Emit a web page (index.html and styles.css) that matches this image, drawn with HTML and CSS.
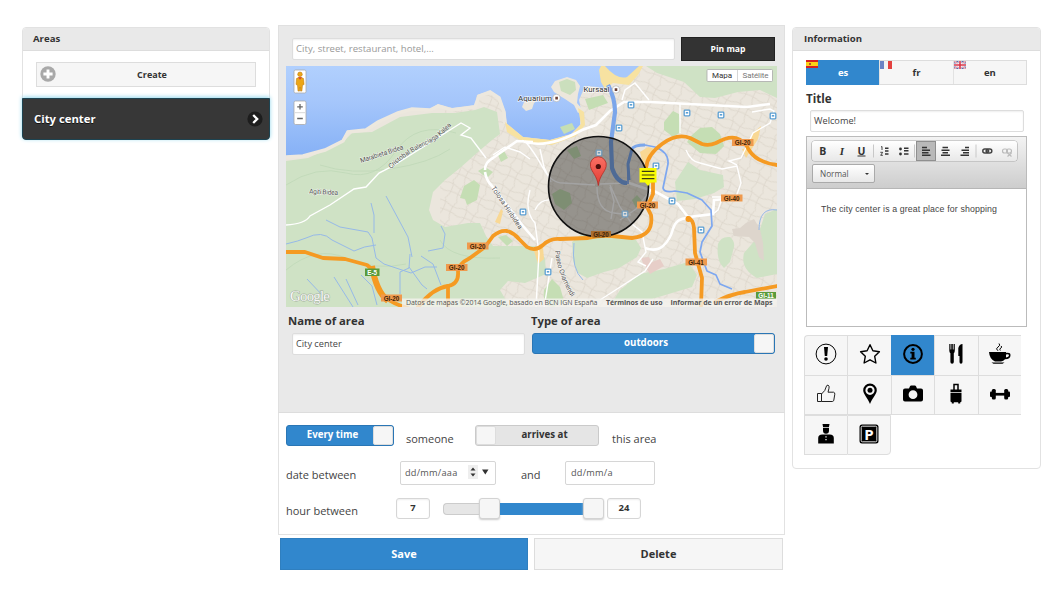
FILE: index.html
```html
<!DOCTYPE html>
<html lang="en">
<head>
<meta charset="utf-8">
<title>Areas</title>
<link rel="stylesheet" href="styles.css">
</head>
<body>
<main class="page">
  <section class="panel areas">
    <h2 class="panel-head">Areas</h2>
    <div class="areas-body">
      <button class="create">
        <svg class="plus" viewBox="0 0 16 16"><circle cx="8" cy="8" r="7.7" fill="#a9a9a9"/><path d="M8 3.4v9.2M3.4 8h9.2" stroke="#fff" stroke-width="2.9"/></svg>
        <span>Create</span>
      </button>
    </div>
    <a class="area-item"><span>City center</span>
      <svg class="chev" viewBox="0 0 16 16"><circle cx="8" cy="8" r="7.6" fill="#1d1d1d"/><path d="M6.2 4l4 4-4 4" fill="none" stroke="#fff" stroke-width="2.3"/></svg>
    </a>
  </section>

  <section class="center">
    <div class="editor">
      <div class="search-row">
        <div class="field search">City, street, restaurant, hotel,...</div>
        <button class="pin">Pin map</button>
      </div>
      <svg class="map" viewBox="286 66 491 241">
        <defs>
          <linearGradient id="sea" x1="0" y1="0" x2="0" y2="1"><stop offset="0" stop-color="#b1d0fe"/><stop offset=".4" stop-color="#a5c6fb"/><stop offset="1" stop-color="#86b1f6"/></linearGradient>
          <linearGradient id="pinfill" x1="0" y1="0" x2="0" y2="1"><stop offset="0" stop-color="#fb7064"/><stop offset="1" stop-color="#e03c33"/></linearGradient>
          <pattern id="streets" width="23" height="19" patternUnits="userSpaceOnUse" patternTransform="rotate(24)"><path d="M0 3C8 0 13 8 23 3M0 12Q11 8 23 12M5 0Q9 10 4 19M16 0Q12 10 17 19" fill="none" stroke="#dcd5ca" stroke-width=".8"/></pattern>
          <g id="stop"><rect x="-2.8" y="-2.8" width="5.6" height="5.6" rx=".8" fill="#fff" stroke="#5b9fd4" stroke-width="1.3"/><path d="M-1.2-1h2.4v1.6h-2.4z" fill="#5b9fd4"/></g>
        </defs>
        <rect x="286" y="66" width="491" height="241" fill="#ebe6dd"/>
        <rect x="440" y="66" width="337" height="241" fill="url(#streets)"/>
        <path d="M286 161L308 158 330 148 345 140 352 133 372 132 400 117 432 113 455 113 475 110 484 107 497 112 500 134 492 140 478 152 460 168 445 180 433 192 429 210 433 220 445 227 468 223 480 223 486 236 493 246 535 246 545 258 546 274 525 283 508 281 500 290 510 307H286z" fill="#cfe2c5"/>
        <g fill="none" stroke="#bfd8b8" stroke-width=".8"><path d="M286 185q30-20 60-12t50-22 60-18M320 165q30 10 70 4t60-20M286 270q30-25 60-12t60 6M440 240q10 20 60 18"/></g>
        <path d="M286 66H603L600 73 611 86 608 90 597 87 585 86 579 100 581 110 580 125 571 134 550 140 523 137 507 124 505 111 500 97 490 91 477 95 475 105 452 108 438 104 430 109 412 108 398 112 378 121 366 129 347 131 342 140 325 149 303 155 286 156z" fill="url(#sea)"/>
        <path d="M286 157L303 156 325 150 343 141 348 132 366 130 378 122 398 113 412 109 430 110 438 106 452 110 475 107 479 96 490 92 499 98 504 112 505 124" fill="none" stroke="#ede8de" stroke-width="3.5"/>
        <path d="M551 87L555 81 567 77 576 80 580 86 578 94 577 103 583 110 578 113 574 105 565 99 560 96 554 92z" fill="#ece7dc"/>
        <path d="M559 82l8-3 8 3 1 8-6 5-9-4z" fill="#cbdfbd"/>
        <path d="M505 122L523 137 550 140 572 134 581 124 578 108 584 112 585 125 576 136 552 145 523 142 507 132z" fill="#f7e2a1"/>
        <path d="M522 107l2-5 12-5 4 2-6 4-2 6-6 2z" fill="#ece7dc"/>
        <path d="M601 66h42l-5 9-9 10-16-2-8 6-4-7-2-12z" fill="#f7e2a1"/>
        <path d="M605 66h34l-12 11q-10 3-22-11z" fill="#a7c8fb"/>
        <path d="M646 66H777V98L760 90 738 92 715 98 700 97 684 82 657 73z" fill="#cfe2c5"/>
        <g fill="#c5deb4">
          <path d="M664 122l9-11 6 3 2 18-8 5-9-7zM585 99l18-4 5 8-19 7zM560 127l12-4 3 6-11 5zM567 150l10-4 4 10-7 3zM700 128l12-1 8 7 4 12-8 8-16-1-13-11 5-7z"/>
          <path d="M572 242l10-8 36 4 18 2 5 8-4 9-18 11-15 4-17 6-9-5-5-12zM675 182l13-20 12 8 23 5 1 12-10 6-19 6-18 2z" fill="#cfe2c5"/>
          <path d="M718 244q3-8 12-7 5 4 4 10l-4 15-6 6q-8-7-6-24zM744 253l13-15 8-24 12-5v65l-20 4q-17-9-13-25zM620 290l20-16 24-5 24-7 9 13-5 12-40 12-22 3-20 4z" fill="#cfe2c5"/>
          <path d="M544 290l8-11 8 8 4 14-10 6q-12 0-10-17zM460 198l4-12 10-6 6 5-3 15-10 5-2-6zM478 171l7-4 8 5-6 6zM498 155l6-4 4 7-7 4zM498 237l8-2 7 6-6 5zM552 194l8-5 10 4 2 10-8 7-9-6zM632 200l5-5 7 8-8 5z"/>
        </g>
        <path d="M746 223l8-4 6 10 3 14 1 18-5-4-4-14-6-6-15-1-2-7 8-1z" fill="#ddd5cc"/>
        <path d="M644 265l16-6 4 7-14 8zM641 258l8-1 3 7-8 2z" fill="#e7cec8"/>
        <path d="M534 251l9-4 1 12-6 5zM640 152l8-5 7 2-7 10-5 5zM742 149l6-1 5-15 8-7-3 13-12 19zM495 222l6-13 2 2-3 13z" fill="#f9d894"/>
        <g fill="none" stroke="#96b9e8" stroke-width="1"><path d="M286 244q13-3 20-6 16-8 26 2l22 11q10-5 22-6M326 220l14 7 28 5 4 6 4 20 8 6 27 9 14-6 12 0M371 203l3 12v18M386 196l22 41 4 20M410 254l-1 14-9 4v22M409 267l13 18 5 4M421 256l12 8 8 21M428 251l15-3 2-14-4-8M307 279l17 18M334 277l19 30M346 279l12 26M361 275l11 11 5 19M574 243q-3 26 9 37M777 210q-18-3-18 20"/></g>
        <g fill="none" stroke="#fff" stroke-width="1.4">
          <path d="M286 225q19-1 24-9l20-11 24-16 12-2 13-14 14-7 68-43 9 5-9 7 10 3 15 20M493 155l12-8 15 5 10 7M530 190q-6 21 5 33l4 30-3 54M525 141q10 12 18 27t20 15l32 2M540 149l4 18 7 15M622 100l3-10 10-7 14 17M686 150q5 12 14 13l22 6 15-3 4 17-5 14h-24M737 165l-8-4 12-3 12-25 17-10 4-12-4-2-18 3"/>
          <path d="M597 187q0 24 17 26l17 2M610 185l10 22 12 17 10 8 4 20-8 10 8 4M610 187l4 14-3 18M600 184l26-1M620 220l16-11 14-18M551 200q-11-1-16 10M680 103v30M552 258l-8 50M600 300l45-29 8-12M722 198l-4 12-5 4"/>
        </g>
        <path d="M522 141Q546 150 582 130L596 125 610 111 624 102 650 102 747 107 770 104M485 170q0-8 8-12l24-17 16 1M485 172q1 8 7 14l31 40 12 14M626 182l30 10 22 12 10 13 25-3 1-14 12-1M688 218q-12 0-15 11t-10 17-18 2" fill="none" stroke="#fff" stroke-width="2.6"/>
        <path d="M628 184L628 164 632 149Q634 145 645 145L655 147Q669 152 668 164L663 188Q664 193 675 191L687 193 702 200 711 210 712 226 702 242 700 252 707 271 716 275 720 284 732 289" fill="none" stroke="#7da7f0" stroke-width="1.700" stroke-linejoin="round"/>
        <path d="M608 85Q615 98 615 112L611 142 612 168Q617 183 627 183" fill="none" stroke="#7ba6ea" stroke-width="4.2"/>
        <path d="M629 180L628 164 632 149Q634 145 645 145" fill="none" stroke="#7ba6ea" stroke-width="3"/>
        <g fill="none" stroke="#f59a22" stroke-width="3.800" stroke-linecap="round" stroke-linejoin="round">
          <path d="M285 252h20l18 6 22 1 22 6 7 6q2 16 9 24t25 13M418 307Q433 288 448 286q11-2 10-14 0-8 12-14l15-11 8-11Q500 230 507 231 514 233 519 239L527 247Q535 252 543 245 550 238 560 239L588 238Q600 235 612 236L632 238Q654 236 651 215L647 207 653 194V180M646 168Q647 155 662 144 677 133 690 138L702 144Q709 146 716 143 728 136 736 138 744 140 749 150 756 162 777 165"/>
          <path d="M688 218q5 1 6 10l1 25 7 25-1 28M715 302q16-8 30-10l32-6M448 286v21"/>
        </g>
        <path d="M372 266q4 25 16 35" fill="none" stroke="#f59a22" stroke-width="6"/>
        <circle cx="688.500" cy="219" r="3" fill="#f59a22"/>
        <circle cx="598.500" cy="186.500" r="50" fill="#000" fill-opacity=".36" stroke="#111" stroke-width="1.6"/>
        <use href="#stop" x="631" y="105"/><use href="#stop" x="687" y="113"/><use href="#stop" x="721" y="115"/><use href="#stop" x="773" y="116"/><use href="#stop" x="619" y="128"/><use href="#stop" x="656" y="166"/><use href="#stop" x="672" y="201"/><use href="#stop" x="701" y="230"/><use href="#stop" x="523" y="212"/><use href="#stop" x="548" y="272"/>
        <g opacity=".65"><use href="#stop" x="599" y="153"/><use href="#stop" x="625" y="214"/></g>
        <path d="M590.500 166.500a8 8 0 1 1 15.600 0c-1.300 6-6.500 9-7.800 19-1.300-10-6.500-13-7.800-19z" fill="url(#pinfill)" stroke="#b32c25" stroke-width=".8"/>
        <circle cx="598.300" cy="166.500" r="2.600" fill="#4e0f0c"/>
        <path d="M639.500 168h17v14.500h-5.500l-3 3.500-3-3.500h-5.500z" fill="#f8fb04"/><path d="M641.800 171.300h12.600M641.800 175h12.600M641.800 178.700h12.600" stroke="#3b3b12" stroke-width="1.200"/>
        <g fill="#ef9a4e"><rect x="732" y="139" width="21.500" height="7"/><rect x="721" y="194.500" width="21.500" height="7"/><rect x="637" y="201.500" width="21" height="7"/><rect x="685.500" y="258.500" width="21.500" height="7"/><rect x="467" y="242.500" width="21.500" height="7"/><rect x="446" y="264" width="21.500" height="7"/><rect x="381" y="294.500" width="21" height="7"/><rect x="591" y="231" width="20" height="6" fill="#a86c2e"/></g>
        <rect x="365" y="268.500" width="14.500" height="7.500" fill="#5a9b3b"/><rect x="756" y="292" width="20" height="7" fill="#5a9b3b"/>
        <g class="shield"><text x="742.700" y="145">GI-20</text><text x="731.700" y="200.500">GI-40</text><text x="647.500" y="207.500">GI-20</text><text x="696" y="264.500">GI-41</text><text x="477.700" y="248.500">GI-20</text><text x="456.700" y="270">GI-20</text><text x="391.500" y="300.500">GI-20</text><text x="601" y="236.500">GI-20</text><text x="372.200" y="274.800" fill="#fff">E-5</text><text x="766" y="298" fill="#fff">GI-11</text></g>
        <g class="street">
          <path id="cb" d="M391 169Q405 155 424 146T455 121" fill="none"/><text><textPath href="#cb" textLength="75">Cristobal Balenciaga Kalea</textPath></text>
          <text transform="translate(361 163) rotate(-18)" textLength="45">Marabieta Bidea</text>
          <text x="309" y="193.500" transform="rotate(3 309 193)" textLength="29">Agiti Bidea</text>
          <text transform="translate(491 188) rotate(56)" textLength="50">Tolosa Hiribidea</text>
          <path id="po" d="M555 251Q558 276 572 298" fill="none"/><text><textPath href="#po" textLength="49">Paseo Oriamendi</textPath></text>
        </g>
        <g class="place"><text x="518" y="100.500" textLength="34">Aquarium</text><text x="583.500" y="92" textLength="26">Kursaal</text></g>
        <g fill="#fff" stroke="#aaa" stroke-width=".6"><circle cx="556.500" cy="98" r="3.700"/><circle cx="616" cy="89.500" r="3.700"/></g>
        <path d="M555.300 96.800h2.600v2.600h-2.600zM614.700 88.300h2.600v2.600h-2.600z" fill="#6b4034"/>
        <text class="glogo" x="290" y="300.500" textLength="40">Google</text>
        <rect x="402" y="298.500" width="375" height="9" fill="#f5f3ef" fill-opacity=".78"/>
        <g class="legal"><text x="406" y="305.300" textLength="191.500">Datos de mapas ©2014 Google, basado en BCN IGN España</text><text x="606" y="305.300" font-weight="700" textLength="56.500">Términos de uso</text><text x="670.500" y="305.300" font-weight="700" textLength="102">Informar de un error de Maps</text></g>
        <g class="control"><rect x="294" y="70" width="12" height="23" rx="1.500"/><rect x="294" y="101" width="12" height="23.500" rx="1.500"/><rect x="707" y="69.500" width="65.500" height="12" rx="1"/></g>
        <path d="M295 112.700h10M737.500 70v11" stroke="#ccc" stroke-width=".8"/>
        <path d="M297.200 106.800h5.600M300 104v5.600M297.200 118.500h5.600" stroke="#666" stroke-width="1.300"/>
        <circle cx="300" cy="74.300" r="2.300" fill="#eca617" stroke="#b8730a" stroke-width=".5"/><path d="M296.500 78.500q3.500-3 7 0l.6 6-1.600.6-.6 6h-1.500l-.4-4-.4 4h-1.600l-.5-6-1.500-.6z" fill="#eca617" stroke="#b8730a" stroke-width=".5"/><path d="M298 77.300h4l-2 2.500z" fill="#d9442d"/>
        <g class="maptype"><text x="712" y="78.300" textLength="20" fill="#333">Mapa</text><text x="742.500" y="78.300" textLength="26" fill="#777">Satélite</text></g>
      </svg>
      <div class="pair">
        <div class="name-col"><h3>Name of area</h3><div class="field">City center</div></div>
        <div class="type-col"><h3>Type of area</h3><div class="switch on"><span>outdoors</span><i class="knob"></i></div></div>
      </div>
    </div>
    <div class="rules">
      <div class="row first">
        <div class="switch on every"><span>Every time</span><i class="knob"></i></div>
        <span class="word who">someone</span>
        <div class="switch off"><i class="knob"></i><span>arrives at</span></div>
        <span class="word where">this area</span>
      </div>
      <div class="row dates">
        <span class="word lead">date between</span>
        <div class="date wide"><span>dd/mm/aaa</span>
          <svg class="spin" viewBox="0 0 24 14"><rect width="10" height="14" fill="#eee"/><path d="M5 2.500l2.500 3h-5zM5 11.500l2.500-3h-5zM14 4.500h6.500l-3.200 5z" fill="#333"/></svg>
        </div>
        <span class="word and">and</span>
        <div class="date narrow"><span>dd/mm/a</span></div>
      </div>
      <div class="row hours">
        <span class="word lead">hour between</span>
        <div class="num">7</div>
        <div class="slider"><i class="track"></i><i class="thumb"></i><i class="fill"></i><i class="thumb"></i></div>
        <div class="num">24</div>
      </div>
    </div>
    <div class="actions"><button class="save">Save</button><button class="delete">Delete</button></div>
  </section>

  <section class="panel info">
    <h2 class="panel-head">Information</h2>
    <div class="info-body">
      <div class="tabs">
        <div class="tab active"><svg class="flag" viewBox="0 0 12 8"><rect width="12" height="8" fill="#d8201f"/><rect y="2" width="12" height="4" fill="#fbd116"/><path d="M3 3h2v2H3z" fill="#b5572c"/></svg>es</div>
        <div class="tab"><svg class="flag" viewBox="0 0 12 8"><rect width="12" height="8" fill="#f3f3f3"/><rect width="4" height="8" fill="#6b83c4"/><rect x="8" width="4" height="8" fill="#e3413f"/></svg>fr</div>
        <div class="tab"><svg class="flag" viewBox="0 0 12 8"><rect width="12" height="8" fill="#5b69a9"/><path d="M0 0l12 8M12 0L0 8" stroke="#f3dfe5" stroke-width="1.800"/><path d="M0 0l12 8M12 0L0 8" stroke="#d55262" stroke-width=".6"/><path d="M6 0v8M0 4h12" stroke="#fff" stroke-width="3"/><path d="M6 0v8M0 4h12" stroke="#d8374a" stroke-width="1.600"/></svg>en</div>
      </div>
      <h3>Title</h3>
      <div class="field title-field">Welcome!</div>
      <div class="rte">
        <div class="toolbar">
          <svg class="tools" viewBox="812 141 205 20">
            <rect x="916.500" y="141.500" width="19" height="19" fill="#b9b9b9" stroke="#8f8f8f"/>
            <path d="M873.500 144.500v13M914.500 144.500v13M976 144.500v13" stroke="#c8c8c8"/>
            <g class="fmt"><text x="822.800" y="155.300">B</text><text x="842" y="155.300" class="it">I</text><text x="861.400" y="154.500">U</text></g>
            <path d="M857.500 156h8" stroke="#333"/>
            <g stroke="#333" stroke-width="1.500" fill="none"><path d="M885 148.300h3.500M885 151h3.500M885 154h3.500M904 148.300h4.500M904 150.800h4.500M904 154h4.500"/><path d="M922 147.600h5M922 150.200h8M922 152.800h6.500M922 155.200h8.500M942.500 147.600h5.500M941.500 150.200h8M942.500 152.800h5.500M941 155.200h9M965 147.600h4M961.500 150.200h7.500M963 152.800h6M960.500 155.200h8.500"/></g>
            <path d="M881 147l1-.5v3.500M880.300 152.300h2.400l-2 3h2.200" fill="none" stroke="#333" stroke-width=".9"/><circle cx="900.500" cy="149" r="1.400" fill="#333"/><circle cx="900.500" cy="154" r="1.400" fill="#333"/>
            <g fill="none" stroke="#444" stroke-width="1.500"><rect x="982.800" y="149" width="5.500" height="4" rx="2"/><rect x="986.300" y="149" width="5.500" height="4" rx="2"/></g><path d="M985.500 151h4" stroke="#444"/>
            <g fill="none" stroke="#bbb" stroke-width="1.200"><rect x="1002.500" y="149" width="5" height="4" rx="2"/><rect x="1006.500" y="149" width="5" height="4" rx="2"/><path d="M1007.500 153l4 3.500M1011.500 153l-4 3.500"/></g>
          </svg>
          <div class="combo"><span>Normal</span><i class="caret"></i></div>
        </div>
        <div class="content">The city center is a great place for shopping</div>
      </div>
      <div class="icons">
        <div class="cell tl"><svg viewBox="0 0 22 22"><circle cx="11" cy="11" r="9.900" fill="none" stroke="#000" stroke-width="1"/><path d="M9 4h4l-.8 9h-2.400z"/><circle cx="11" cy="16" r="1.800"/></svg></div>
        <div class="cell"><svg viewBox="0 0 22 22"><path d="M11 1.700l2.900 6.100 6.500.9-4.700 4.600 1.200 6.700-5.900-3.200L5.100 20l1.200-6.700-4.700-4.600 6.500-.9z" fill="none" stroke="#000" stroke-width="1.400" stroke-linejoin="round"/></svg></div>
        <div class="cell sel"><svg viewBox="0 0 22 22"><circle cx="11" cy="11" r="8.900" fill="none" stroke="#000" stroke-width="2"/><circle cx="11" cy="6.300" r="1.600"/><path d="M8.300 8.800h4.200v6h1.300v1.600H8.300v-1.600h1.300v-4.400H8.300z"/></svg></div>
        <div class="cell"><svg viewBox="0 0 22 22"><path d="M4.300 1h1.200v5.500h.8V1h1.500v5.500h.8V1h1.200v6.500q0 2-1 2.700V19q0 1.700-1.700 1.700T5.400 19v-8.800Q4.300 9.500 4.300 7.500zM13.300 5q1.200-3.800 4.200-4v18q0 1.700-1.500 1.700T14.500 19v-6h-1.200z"/></svg></div>
        <div class="cell"><svg viewBox="0 0 22 22"><path fill-rule="evenodd" d="M0 9h17.200v1q4.300-.8 4.300 2.200 0 3.800-5.500 4.100-1.500 2-4 2.200H6Q.5 16 0 9zM17 11.500v3q3-.5 3-2.200 0-1.300-3-.8zM2.500 19.500h13l-2 1.200h-9z"/><path d="M9 7.800q-3-2 0-3.800t1-3.500M11.300 7.500q-1.300-1.500.5-2.500t.2-2" fill="none" stroke="#000" stroke-width="1"/></svg></div>
        <div class="cell"><svg viewBox="0 0 22 22" fill="none" stroke="#222" stroke-width="1"><path d="M2.500 10.500h4v8h-4zM6.500 11q4-3 5-8 .3-1 1.500-.8 1.700.5 1 3l-1 4h5.500q1.500.3 1.300 2l-1 6q-.3 1.300-1.500 1.300H6.500"/></svg></div>
        <div class="cell"><svg viewBox="0 0 22 22"><path fill-rule="evenodd" d="M11 .5a6.800 6.800 0 0 1 6.800 6.800C17.800 11 13 15.500 11 21 9 15.500 4.200 11 4.200 7.300A6.800 6.800 0 0 1 11 .5zm0 2.200a4.600 4.600 0 1 0 0 9.200 4.600 4.600 0 0 0 0-9.200z"/><circle cx="11" cy="7.300" r="2.500"/></svg></div>
        <div class="cell"><svg viewBox="0 0 22 22"><path fill-rule="evenodd" d="M3 5.500h4l1-2.200q.3-.8 1.200-.8h3.600q.9 0 1.200.8l1 2.200h4q2 0 2 2v9q0 2-2 2H3q-2 0-2-2v-9q0-2 2-2zM11 7.300a4.400 4.400 0 1 0 0 8.800 4.400 4.400 0 0 0 0-8.800z"/></svg></div>
        <div class="cell"><svg viewBox="0 0 22 22"><path d="M9 7V1.500h4V7" fill="none" stroke="#000" stroke-width="1.500"/><path d="M5.500 6.500h11v2.700h-11zM5.500 9.900h11V18q0 1.300-1.300 1.300H6.800q-1.300 0-1.300-1.300zM6.800 19h2v1.500h-2zM13.200 19h2v1.500h-2z"/></svg></div>
        <div class="cell"><svg viewBox="0 0 22 22"><rect x="2.800" y="6" width="4" height="10.500" rx="1.500"/><rect x="1" y="8.500" width="2.500" height="5.500" rx="1"/><rect x="15.200" y="6" width="4" height="10.500" rx="1.500"/><rect x="18.500" y="8.500" width="2.500" height="5.500" rx="1"/><path d="M6 9.900h10v2.700H6z"/></svg></div>
        <div class="cell"><svg viewBox="0 0 22 22"><path d="M7.500 1h7l-.6 3.200H8.100zM8 5h6v2.500a3 3.300 0 0 1-6 0zM3.200 20.500V15q0-3.500 4-3.500h7.600q4 0 4 3.500v5.500z"/><path d="M11 13.200v1.300M11 16v1.300" stroke="#eee" stroke-width="1.300"/></svg></div>
        <div class="cell br"><svg viewBox="0 0 22 22"><rect x="1.500" y="1.500" width="19" height="19" rx="2.500"/><rect x="3.200" y="3.200" width="15.600" height="15.600" rx="1.200" fill="none" stroke="#f6f6f6" stroke-width=".9"/><text x="11" y="16.500" class="park">P</text></svg></div>
      </div>
    </div>
  </section>
</main>
</body>
</html>
```
FILE: styles.css
```css
* { box-sizing: border-box; }
body { margin: 0; background: #fff; color: #333; font: 11px "Open Sans", sans-serif; }
h2, h3, button { margin: 0; font-family: inherit; color: inherit; padding: 0; }
.page { width: 1061px; height: 589px; overflow: hidden; padding: 25px 20px 0 22px; display: flex; align-items: flex-start; }
.panel { border: 1px solid #e2e2e2; border-radius: 4px; background: #fff; margin-top: 2px; }
.panel-head { height: 23px; background: #e9e9e9; border-bottom: 1px solid #ddd; font-size: 9.6px; line-height: 22px; padding-left: 10px; border-radius: 3px 3px 0 0; }
.info .panel-head { padding-left: 11px; }
.areas { width: 248px; margin-right: 8px; }
.areas-body { padding: 11px 13px; height: 47px; }
.create { display: flex; align-items: center; width: 100%; height: 25px; border: 1px solid #ddd; background: #f6f6f6; font-size: 9px; font-weight: 700; padding: 0 0 1px 4px; }
.create span { flex: 1; padding-right: 7px; }
.plus, .chev { width: 16px; height: 16px; }
.plus { margin-left: -1px; }
.chev { margin-right: -1px; }
.area-item { display: flex; justify-content: space-between; align-items: center; height: 42px; margin: 0 -1px -1px; padding: 0 7px 1px 11px; border: 1px solid #1d4452; border-radius: 0 0 4px 4px; background: #373737; color: #fff; font-size: 11.3px; font-weight: 700; text-shadow: 0 1px 0 #111; box-shadow: 0 -1px 4px #8fd6ec; }

.center { width: 507px; margin-right: 7px; }
.editor { height: 388px; background: #e9e9e9; border: 1px solid #e0e0e0; border-bottom-color: #ddd; padding: 11px 7px 0; }
.search-row { display: flex; justify-content: space-between; align-items: center; height: 24px; padding: 0 2px 0 6px; margin-bottom: 5px; }
.field { height: 22px; border: 1px solid #ddd; border-radius: 2px; background: #fff; font-size: 9.2px; line-height: 20px; padding: 0 3px; color: #444; box-shadow: inset 0 1px 2px #eee; }
.search { width: 383px; color: #999; font-size: 9.6px; line-height: 19px; }
.pin { width: 94px; height: 24px; border: 1px solid #222; background: #333; color: #fff; font-size: 8.6px; font-weight: 700; }
.map { display: block; width: 491px; height: 241px; }
.shield text { font: 700 6.3px "Liberation Sans", sans-serif; text-anchor: middle; }
.shield { fill: #402407; }
.street { font: 6.8px Roboto, sans-serif; fill: #555; stroke: #fff; stroke-width: 1.2px; stroke-opacity: .6; paint-order: stroke; }
.street path { stroke: none; }
.place { font: 8px Roboto, sans-serif; fill: #333; stroke: #fff; stroke-width: 1.4px; stroke-opacity: .7; paint-order: stroke; }
.glogo { font: 15px "Liberation Serif", serif; fill: #f7f7f7; stroke: #a3b09e; stroke-width: 1px; paint-order: stroke; }
.legal { font: 7px "Open Sans", sans-serif; fill: #555; }
.control { fill: #fff; stroke: #aaa; stroke-width: .8px; }
.maptype { font: 8px Roboto, sans-serif; }
h3 { font-size: 11.3px; line-height: 18px; font-weight: 700; }
.pair { display: flex; justify-content: space-between; padding: 5px 2px 0; }
.name-col { width: 237px; }
.name-col .field { margin: 3px 0 0 4px; }
.type-col { width: 244px; }
.type-col .switch { margin: 3px 0 0 1px; }
.switch { display: flex; height: 21px; border: 1px solid #cacaca; border-radius: 3px; background: #e5e5e5; font-size: 9.7px; font-weight: 700; line-height: 18px; text-align: center; }
.switch span { flex: 1; }
.on span { padding-left: 5px; }
.switch.on { background: #3187cd; border-color: #2a76b5; color: #fff; }
.knob { width: 20px; background: #f6f6f6; border-radius: 2px; border: 1px solid #ddd; }

.rules { height: 122px; border: 1px solid #e2e2e2; border-top: 0; padding: 12px 7px 0; }
.row { display: flex; align-items: flex-start; }
.word { font-size: 11px; line-height: 15px; color: #444; padding-top: 6px; }
.every { width: 108px; }
.who { width: 81px; padding-left: 12px; }
.off { width: 124px; }
.off span { padding-right: 5px; }
.where { padding-left: 13px; }
.dates { margin-top: 15px; }
.lead { width: 110px; }
.dates .lead { width: 114px; }
.date { height: 24px; border: 1px solid #d6d6d6; border-radius: 2px; display: flex; align-items: center; font-size: 9.2px; letter-spacing: .25px; padding: 0 3px 2px 4px; color: #555; }
.wide { width: 96px; justify-content: space-between; }
.spin { width: 24px; height: 14px; }
.and { width: 69px; padding-left: 25px; }
.narrow { width: 90px; padding-left: 5px; }
.hours { margin-top: 13px; }
.hours .word { padding-top: 5px; }
.num { width: 34px; height: 21px; border: 1px solid #d6d6d6; border-radius: 3px; text-align: center; font-size: 9.5px; line-height: 18px; font-weight: 700; box-shadow: inset 0 1px 2px #eee; }
.slider { display: flex; align-items: center; width: 161px; margin: 0 3px 0 13px; }
.track { width: 36px; height: 12px; border: 1px solid #ccc; border-right: 0; border-radius: 4px 0 0 4px; background: #e6e6e6; }
.thumb { width: 21px; height: 21px; border: 1px solid #d3d3d3; border-radius: 3px; background: #f6f6f6; box-shadow: 0 1px 2px #ccc; }
.fill { flex: 1; height: 12px; background: #3187cd; }
.actions { display: flex; justify-content: space-between; padding: 3px 2px 0; }
.actions button { height: 32px; font-size: 11px; font-weight: 700; padding-bottom: 1px; }
.save { width: 248px; border: 1px solid #2f7fbf; background: #3187cd; color: #fff; }
.actions .delete { width: 249px; border: 1px solid #ddd; background: #f6f6f6; }

.info { width: 249px; height: 442px; }
.info-body { padding: 9px 13px 0; }
.tabs { display: flex; height: 25px; border: 1px solid #ddd; }
.tab { position: relative; flex: 1; text-align: center; font-size: 9.5px; font-weight: 700; line-height: 23px; background: #f6f6f6; border-left: 1px solid #e2e2e2; }
.tab.active { background: #3187cd; color: #fff; margin: -1px 0 -1px -1px; padding-left: 1px; border: 0; line-height: 25px; }
.flag { position: absolute; left: 0; top: 0; width: 12px; height: 8px; }
.info h3 { margin-top: 5px; font-size: 11.6px; }
.title-field { margin: 2px 3px 4px 4px; }
.rte { border: 1px solid #bbb; height: 191px; }
.toolbar { height: 52px; padding: 4px 5px; background: linear-gradient(#f3f3f3, #cdcdcd); border-bottom: 1px solid #b6b6b6; }
.tools { display: block; width: 205px; height: 20px; border-radius: 3px; background: linear-gradient(#fff, #e8e8e8); box-shadow: 0 0 0 .6px #aaa; }
.fmt { font: 700 10.5px "Open Sans", sans-serif; text-anchor: middle; fill: #333; }
.it { font: italic 700 11px "Liberation Serif", serif; }
.combo { display: flex; align-items: center; justify-content: space-between; width: 63px; height: 19px; margin-top: 3px; padding: 0 5px 0 7px; border: 1px solid #aaa; border-radius: 2px; background: linear-gradient(#fff, #e8e8e8); font-size: 8.2px; color: #555; }
.caret { border: 2px solid transparent; border-top: 2.5px solid #333; border-bottom: 0; }
.content { padding: 15px 14px; font: 8.8px/11px "Liberation Sans", sans-serif; letter-spacing: .12px; white-space: nowrap; color: #444; }
.icons { display: grid; grid-template-columns: repeat(5, 43.4px); grid-auto-rows: 40px; margin: 8px 0 0 -2px; }
.cell { display: flex; align-items: center; justify-content: center; padding-bottom: 3px; background: #f6f6f6; border: 1px solid #ddd; border-width: 1px 0 0 1px; }
.cell svg { width: 22px; height: 22px; }
.cell:nth-child(n+6) { border-bottom-width: 1px; }
.tl { border-radius: 4px 0 0 0; }
.br { border-right-width: 1px; border-radius: 0 0 4px 0; }
.sel { background: #3187cd; border-color: #3187cd; }
.park { font: 700 15px "Open Sans", sans-serif; fill: #fff; text-anchor: middle; }
```
